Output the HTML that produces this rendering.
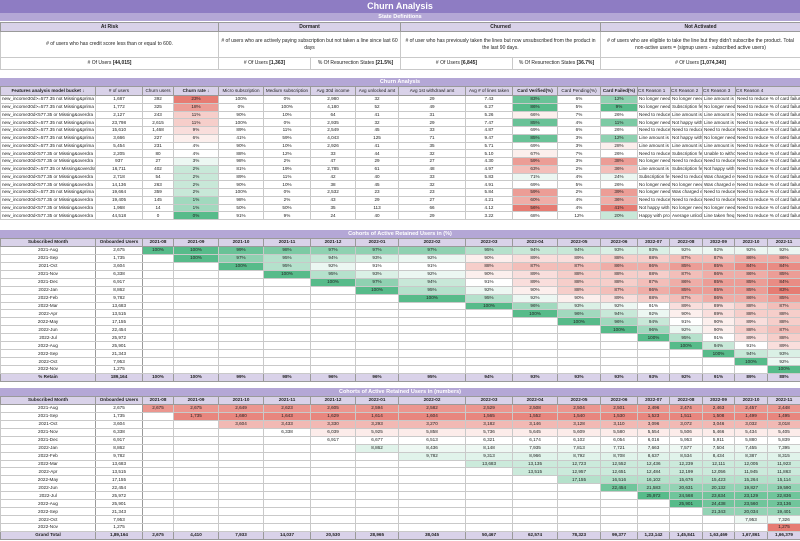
<!DOCTYPE html>
<html><head><meta charset="utf-8">
<style>
*{margin:0;padding:0;box-sizing:border-box}
body{width:800px;height:541px;background:#fff;position:relative;overflow:hidden;font-family:"Liberation Sans",sans-serif;color:#222}
.bar{position:absolute;left:0;width:800px;color:#fff;font-weight:bold;text-align:center}
.t1{top:0;height:13px;background:#8e7cc3;font-size:9px;line-height:13px}
.t2{background:#b4a7d6;font-size:5.5px;line-height:8px;height:8px}
table{position:absolute;left:0;width:800px;border-collapse:collapse;table-layout:fixed;font-size:4.6px}
td{border:1px solid #c9c9c9;text-align:center;white-space:nowrap;overflow:hidden;padding:0 1px;line-height:6px}
th{border:1px solid #9a9a9a;background:#d9d2e9;font-weight:bold;text-align:center;white-space:nowrap;overflow:hidden;line-height:6px}
.sd td{font-size:5px;line-height:7px}
.sd th{font-size:5px}
.ct tr{height:7.75px}
.ct td.l{text-align:left}
.ct td.x{text-align:left;padding-left:1px}
.ct th.n{font-weight:normal}
.co tr{height:7.94px}
.co td:first-child,.co td:nth-child(2){border-right:1px solid #9a9a9a}
.ft td{background:#d9d2e9;font-weight:bold;border:1px solid #9a9a9a}
.g9{background:#57bb8a}.g8{background:#69c297}.g7{background:#7ccaa4}.g6{background:#8fd1b1}.g5{background:#a1d9be}.g4{background:#b5e1cc}.g3{background:#c8e8d8}.g2{background:#daf0e5}.g1{background:#ecf7f2}
.r1{background:#fcefed}.r2{background:#f9dedc}.r3{background:#f6ceca}.r4{background:#f3beb9}.r5{background:#efada7}.r6{background:#ec9d96}.r7{background:#e98c84}.r8{background:#e67c73}
.a{background:#e8867e}.b{background:#eb968f}.c{background:#f2b9b4}.d{background:#fcecea}.f{background:#eef8f3}.h{background:#e0f3ea}.i{background:#cbeadb}.j{background:#b5e1cb}.k{background:#93d3b4}.m{background:#70c59b}.z{background:#e67c73}
</style></head><body>
<div class="bar t1">Churn Analysis</div>
<div class="bar t2" style="top:13px">State Definitions</div>
<table class="sd" style="top:22px">
<colgroup><col style="width:218px"><col style="width:92px"><col style="width:90px"><col style="width:112px"><col style="width:88px"><col style="width:200px"></colgroup>
<tr style="height:9px"><th colspan="1">At Risk</th><th colspan="2">Dormant</th><th colspan="2">Churned</th><th>Not Activated</th></tr>
<tr style="height:26px"><td style="white-space:normal"># of users who has credit score less than or equal to 600.</td><td colspan="2" style="white-space:normal"># of users who are actively paying subscription but not taken a line since last 60 days</td><td colspan="2" style="white-space:normal"># of user who has previously taken the lines but now unsubscribed from the product in the last 90 days.</td><td style="white-space:normal"># of users who are eligible to take the line but they didn't subscribe the product. Total non-active users = (signup users - subscribed active users)</td></tr>
<tr style="height:12px"><td># Of Users <b>[44,015]</b></td><td># Of Users <b>[1,363]</b></td><td>% Of Resurrection States <b>[21.5%]</b></td><td># Of Users <b>[6,845]</b></td><td>% Of Resurrection States <b>[36.7%]</b></td><td># Of Users <b>[1,074,340]</b></td></tr>
</table>
<div class="bar t2" style="top:78px">Churn Analysis</div>
<table class="ct" style="top:86px">
<colgroup><col style="width:95px"><col style="width:47px"><col style="width:31px"><col style="width:45px"><col style="width:45px"><col style="width:47px"><col style="width:45px"><col style="width:43px"><col style="width:67px"><col style="width:47px"><col style="width:45px"><col style="width:43px"><col style="width:37px"><col style="width:33px"><col style="width:32px"><col style="width:33px"><col style="width:65px"></colgroup>
<tr style="height:9px"><th>Features analysis model bucket ↓</th><th class="n"># of users</th><th class="n">Churn users</th><th>Churn rate ↓</th><th class="n">Micro subscription</th><th class="n">Medium subscription</th><th class="n">Avg 30d income</th><th class="n">Avg unlocked amt</th><th class="n">Avg 1st withdrawl amt</th><th class="n">Avg # of lines taken</th><th>Card Verified(%)</th><th class="n">Card Pending(%)</th><th>Card Failed(%)</th><th class="n" style="text-align:left">CX Reason 1</th><th class="n" style="text-align:left">CX Reason 2</th><th class="n" style="text-align:left">CX Reason 3</th><th class="n" style="text-align:left">CX Reason 4</th></tr>
<tr><td class="l">new_income30d&gt;=577.35 not Missing&amp;prima</td><td>1,687</td><td>392</td><td class="r8">23%</td><td>100%</td><td>0%</td><td>2,980</td><td>32</td><td>29</td><td>7.43</td><td class="g8">83%</td><td>6%</td><td class="g6">12%</td><td class="x">No longer need</td><td class="x">No longer need</td><td class="x">Line amount is</td><td class="x">Need to reduce % of card failur</td></tr>
<tr><td class="l">new_income30d&gt;=577.35 not Missing&amp;prima</td><td>1,772</td><td>325</td><td class="r6">18%</td><td>0%</td><td>100%</td><td>4,180</td><td>52</td><td>49</td><td>6.27</td><td class="g9">86%</td><td>5%</td><td class="g9">9%</td><td class="x">No longer need</td><td class="x">Subscription fe</td><td class="x">No longer need</td><td class="x">Need to reduce % of card failur</td></tr>
<tr><td class="l">new_income30d&lt;577.35 or Missing&amp;overdra</td><td>2,127</td><td>243</td><td class="r3">11%</td><td>90%</td><td>10%</td><td>64</td><td>41</td><td>31</td><td>5.26</td><td class="r1">66%</td><td>7%</td><td>26%</td><td class="x">Need to reduce</td><td class="x">Line amount is</td><td class="x">Line amount is</td><td class="x">Need to reduce % of card failur</td></tr>
<tr><td class="l">new_income30d&gt;=577.35 not Missing&amp;prima</td><td>23,798</td><td>2,615</td><td class="r3">11%</td><td>100%</td><td>0%</td><td>2,935</td><td>32</td><td>29</td><td>7.47</td><td class="g8">85%</td><td>4%</td><td class="g7">11%</td><td class="x">No longer need</td><td class="x">Not happy with</td><td class="x">Line amount is</td><td class="x">Need to reduce % of card failur</td></tr>
<tr><td class="l">new_income30d&gt;=577.35 not Missing&amp;prima</td><td>15,610</td><td>1,468</td><td class="r2">9%</td><td>89%</td><td>11%</td><td>2,549</td><td>45</td><td>33</td><td>4.87</td><td>69%</td><td>6%</td><td>26%</td><td class="x">Need to reduce</td><td class="x">Need to reduce</td><td class="x">Need to reduce</td><td class="x">Need to reduce % of card failur</td></tr>
<tr><td class="l">new_income30d&gt;=577.35 not Missing&amp;prima</td><td>3,666</td><td>227</td><td class="r1">6%</td><td>41%</td><td>59%</td><td>4,043</td><td>125</td><td>71</td><td>9.47</td><td class="g8">85%</td><td>3%</td><td class="g6">12%</td><td class="x">Line amount is</td><td class="x">Not happy with</td><td class="x">No longer need</td><td class="x">Need to reduce % of card failur</td></tr>
<tr><td class="l">new_income30d&gt;=577.35 not Missing&amp;prima</td><td>5,454</td><td>231</td><td>4%</td><td>90%</td><td>10%</td><td>2,926</td><td>41</td><td>35</td><td>5.71</td><td>69%</td><td>3%</td><td class="r1">28%</td><td class="x">Line amount is</td><td class="x">Line amount is</td><td class="x">Line amount is</td><td class="x">Need to reduce % of card failur</td></tr>
<tr><td class="l">new_income30d&lt;577.35 or Missing&amp;overdra</td><td>2,205</td><td>80</td><td>4%</td><td>88%</td><td>12%</td><td>33</td><td>44</td><td>32</td><td>5.10</td><td class="r1">67%</td><td>7%</td><td>26%</td><td class="x">Need to reduce</td><td class="x">Subscription fe</td><td class="x">Unable to witho</td><td class="x">Need to reduce % of card failur</td></tr>
<tr><td class="l">new_income30d&lt;577.35 or Missing&amp;overdra</td><td>937</td><td>27</td><td class="g1">3%</td><td>98%</td><td>2%</td><td>47</td><td>29</td><td>27</td><td>4.30</td><td class="r6">59%</td><td>3%</td><td class="r6">38%</td><td class="x">No longer need</td><td class="x">Need to reduce</td><td class="x">Need to reduce</td><td class="x">Need to reduce % of card failur</td></tr>
<tr><td class="l">new_income30d&gt;=577.35 or Missing&amp;overdra</td><td>16,711</td><td>402</td><td class="g3">2%</td><td>81%</td><td>19%</td><td>2,785</td><td>61</td><td>48</td><td>4.97</td><td class="r4">63%</td><td>2%</td><td class="r4">36%</td><td class="x">Line amount is</td><td class="x">Subscription fe</td><td class="x">Not happy with</td><td class="x">Need to reduce % of card failur</td></tr>
<tr><td class="l">new_income30d&lt;577.35 or Missing&amp;overdra</td><td>2,718</td><td>54</td><td class="g3">2%</td><td>89%</td><td>11%</td><td>42</td><td>40</td><td>33</td><td>5.83</td><td class="g1">71%</td><td>4%</td><td class="g1">24%</td><td class="x">Subscription fe</td><td class="x">Need to reduce</td><td class="x">Was charged ex</td><td class="x">Need to reduce % of card failur</td></tr>
<tr><td class="l">new_income30d&lt;577.35 or Missing&amp;overdra</td><td>14,136</td><td>263</td><td class="g3">2%</td><td>90%</td><td>10%</td><td>38</td><td>45</td><td>32</td><td>4.91</td><td>69%</td><td>5%</td><td>26%</td><td class="x">No longer need</td><td class="x">No longer need</td><td class="x">Was charged ex</td><td class="x">Need to reduce % of card failur</td></tr>
<tr><td class="l">new_income30d&gt;=577.35 not Missing&amp;prima</td><td>19,664</td><td>359</td><td class="g3">2%</td><td>100%</td><td>0%</td><td>2,532</td><td>23</td><td>23</td><td>5.84</td><td class="r6">59%</td><td>2%</td><td class="r6">39%</td><td class="x">No longer need</td><td class="x">Was charged ex</td><td class="x">Need to reduce</td><td class="x">Need to reduce % of card failur</td></tr>
<tr><td class="l">new_income30d&lt;577.35 or Missing&amp;overdra</td><td>19,405</td><td>145</td><td class="g5">1%</td><td>98%</td><td>2%</td><td>43</td><td>29</td><td>27</td><td>4.21</td><td class="r5">60%</td><td>4%</td><td class="r5">36%</td><td class="x">Need to reduce</td><td class="x">Need to reduce</td><td class="x">Need to reduce</td><td class="x">Need to reduce % of card failur</td></tr>
<tr><td class="l">new_income30d&lt;577.35 or Missing&amp;overdra</td><td>1,968</td><td>14</td><td class="g5">1%</td><td>50%</td><td>50%</td><td>35</td><td>113</td><td>66</td><td>4.12</td><td class="r8">56%</td><td>4%</td><td class="r8">41%</td><td class="x">Not happy with</td><td class="x">No longer need</td><td class="x">No longer need</td><td class="x">Need to reduce % of card failur</td></tr>
<tr><td class="l">new_income30d&lt;577.35 or Missing&amp;overdra</td><td>44,518</td><td>0</td><td class="g9">0%</td><td>91%</td><td>9%</td><td>24</td><td>40</td><td>29</td><td>3.22</td><td>68%</td><td>12%</td><td class="g3">20%</td><td class="x">Happy with pro</td><td class="x">Average unlock</td><td class="x">Line taken freq</td><td class="x">Need to reduce % of card failur</td></tr>
</table>

<div class="bar t2" style="top:230px">Cohorts of Active Retained Users in (%)</div>
<table class="co" style="top:238px">
<colgroup><col style="width:95px"><col style="width:47px"><col style="width:31px"><col style="width:45px"><col style="width:45px"><col style="width:47px"><col style="width:45px"><col style="width:43px"><col style="width:67px"><col style="width:47px"><col style="width:45px"><col style="width:43px"><col style="width:37px"><col style="width:32px"><col style="width:33px"><col style="width:32px"><col style="width:33px"><col style="width:33px"></colgroup>
<tr><th>Subscribed Month</th><th>Onboarded Users</th><th>2021-08</th><th>2021-09</th><th>2021-10</th><th>2021-11</th><th>2021-12</th><th>2022-01</th><th>2022-02</th><th>2022-03</th><th>2022-04</th><th>2022-05</th><th>2022-06</th><th>2022-07</th><th>2022-08</th><th>2022-09</th><th>2022-10</th><th>2022-11</th></tr>
<tr><td>2021-Aug</td><td>2,675</td><td class="g9">100%</td><td class="g9">100%</td><td class="g8">99%</td><td class="g7">98%</td><td class="g6">97%</td><td class="g6">97%</td><td class="g6">97%</td><td class="g4">95%</td><td class="g3">94%</td><td class="g3">94%</td><td class="g2">93%</td><td class="g2">93%</td><td class="g1">92%</td><td class="g1">92%</td><td class="g1">92%</td><td class="g1">92%</td></tr>
<tr><td>2021-Sep</td><td>1,735</td><td></td><td class="g9">100%</td><td class="g6">97%</td><td class="g4">95%</td><td class="g3">94%</td><td class="g2">93%</td><td class="g1">92%</td><td class="r1">90%</td><td class="r2">89%</td><td class="r2">89%</td><td class="r3">88%</td><td class="r3">88%</td><td class="r4">87%</td><td class="r4">87%</td><td class="r5">86%</td><td class="r5">86%</td></tr>
<tr><td>2021-Oct</td><td>3,604</td><td></td><td></td><td class="g9">100%</td><td class="g4">95%</td><td class="g1">92%</td><td>91%</td><td>91%</td><td class="r3">88%</td><td class="r4">87%</td><td class="r4">87%</td><td class="r5">86%</td><td class="r5">86%</td><td class="r6">85%</td><td class="r6">85%</td><td class="r7">84%</td><td class="r7">84%</td></tr>
<tr><td>2021-Nov</td><td>6,338</td><td></td><td></td><td></td><td class="g9">100%</td><td class="g4">95%</td><td class="g2">93%</td><td class="g1">92%</td><td class="r1">90%</td><td class="r2">89%</td><td class="r3">88%</td><td class="r3">88%</td><td class="r3">88%</td><td class="r4">87%</td><td class="r5">86%</td><td class="r5">86%</td><td class="r6">85%</td></tr>
<tr><td>2021-Dec</td><td>6,917</td><td></td><td></td><td></td><td></td><td class="g9">100%</td><td class="g6">97%</td><td class="g3">94%</td><td>91%</td><td class="r2">89%</td><td class="r3">88%</td><td class="r3">88%</td><td class="r4">87%</td><td class="r5">86%</td><td class="r6">85%</td><td class="r6">85%</td><td class="r7">84%</td></tr>
<tr><td>2022-Jan</td><td>8,862</td><td></td><td></td><td></td><td></td><td></td><td class="g9">100%</td><td class="g4">95%</td><td class="g1">92%</td><td class="r1">90%</td><td class="r3">88%</td><td class="r4">87%</td><td class="r5">86%</td><td class="r6">85%</td><td class="r6">85%</td><td class="r6">85%</td><td class="r8">83%</td></tr>
<tr><td>2022-Feb</td><td>9,782</td><td></td><td></td><td></td><td></td><td></td><td></td><td class="g9">100%</td><td class="g4">95%</td><td class="g1">92%</td><td class="r1">90%</td><td class="r2">89%</td><td class="r3">88%</td><td class="r4">87%</td><td class="r5">86%</td><td class="r5">86%</td><td class="r6">85%</td></tr>
<tr><td>2022-Mar</td><td>13,683</td><td></td><td></td><td></td><td></td><td></td><td></td><td></td><td class="g9">100%</td><td class="g5">96%</td><td class="g2">93%</td><td class="g1">92%</td><td>91%</td><td class="r2">89%</td><td class="r2">89%</td><td class="r3">88%</td><td class="r4">87%</td></tr>
<tr><td>2022-Apr</td><td>13,515</td><td></td><td></td><td></td><td></td><td></td><td></td><td></td><td></td><td class="g9">100%</td><td class="g5">96%</td><td class="g3">94%</td><td class="g1">92%</td><td class="r1">90%</td><td class="r2">89%</td><td class="r3">88%</td><td class="r3">88%</td></tr>
<tr><td>2022-May</td><td>17,155</td><td></td><td></td><td></td><td></td><td></td><td></td><td></td><td></td><td></td><td class="g9">100%</td><td class="g5">96%</td><td class="g3">94%</td><td>91%</td><td class="r1">90%</td><td class="r2">89%</td><td class="r3">88%</td></tr>
<tr><td>2022-Jun</td><td>22,454</td><td></td><td></td><td></td><td></td><td></td><td></td><td></td><td></td><td></td><td></td><td class="g9">100%</td><td class="g5">96%</td><td class="g1">92%</td><td class="r1">90%</td><td class="r3">88%</td><td class="r4">87%</td></tr>
<tr><td>2022-Jul</td><td>25,972</td><td></td><td></td><td></td><td></td><td></td><td></td><td></td><td></td><td></td><td></td><td></td><td class="g9">100%</td><td class="g4">95%</td><td>91%</td><td class="r2">89%</td><td class="r3">88%</td></tr>
<tr><td>2022-Aug</td><td>25,901</td><td></td><td></td><td></td><td></td><td></td><td></td><td></td><td></td><td></td><td></td><td></td><td></td><td class="g9">100%</td><td class="g3">94%</td><td>91%</td><td class="r2">89%</td></tr>
<tr><td>2022-Sep</td><td>21,343</td><td></td><td></td><td></td><td></td><td></td><td></td><td></td><td></td><td></td><td></td><td></td><td></td><td></td><td class="g9">100%</td><td class="g3">94%</td><td class="g2">93%</td></tr>
<tr><td>2022-Oct</td><td>7,953</td><td></td><td></td><td></td><td></td><td></td><td></td><td></td><td></td><td></td><td></td><td></td><td></td><td></td><td></td><td class="g9">100%</td><td class="g1">92%</td></tr>
<tr><td>2022-Nov</td><td>1,275</td><td></td><td></td><td></td><td></td><td></td><td></td><td></td><td></td><td></td><td></td><td></td><td></td><td></td><td></td><td></td><td class="g9">100%</td></tr>
<tr class="ft"><td>% Retain</td><td>189,164</td><td>100%</td><td>100%</td><td>99%</td><td>98%</td><td>96%</td><td>96%</td><td>95%</td><td>94%</td><td>93%</td><td>93%</td><td>93%</td><td>93%</td><td>92%</td><td>91%</td><td>89%</td><td>88%</td></tr>
</table>

<div class="bar t2" style="top:388px">Cohorts of Active Retained Users in (numbers)</div>
<table class="co" style="top:396px">
<colgroup><col style="width:95px"><col style="width:47px"><col style="width:31px"><col style="width:45px"><col style="width:45px"><col style="width:47px"><col style="width:45px"><col style="width:43px"><col style="width:67px"><col style="width:47px"><col style="width:45px"><col style="width:43px"><col style="width:37px"><col style="width:32px"><col style="width:33px"><col style="width:32px"><col style="width:33px"><col style="width:33px"></colgroup>
<tr><th>Subscribed Month</th><th>Onboarded Users</th><th>2021-08</th><th>2021-09</th><th>2021-10</th><th>2021-11</th><th>2021-12</th><th>2022-01</th><th>2022-02</th><th>2022-03</th><th>2022-04</th><th>2022-05</th><th>2022-06</th><th>2022-07</th><th>2022-08</th><th>2022-09</th><th>2022-10</th><th>2022-11</th></tr>
<tr><td>2021-Aug</td><td>2,675</td><td class="b">2,675</td><td class="b">2,675</td><td class="b">2,649</td><td class="b">2,623</td><td class="b">2,605</td><td class="b">2,594</td><td class="b">2,582</td><td class="b">2,529</td><td class="b">2,508</td><td class="b">2,504</td><td class="b">2,501</td><td class="b">2,496</td><td class="b">2,474</td><td class="b">2,463</td><td class="b">2,457</td><td class="b">2,448</td></tr>
<tr><td>2021-Sep</td><td>1,735</td><td></td><td class="a">1,735</td><td class="a">1,680</td><td class="a">1,643</td><td class="a">1,629</td><td class="a">1,614</td><td class="a">1,604</td><td class="a">1,565</td><td class="a">1,552</td><td class="a">1,540</td><td class="a">1,530</td><td class="a">1,523</td><td class="a">1,511</td><td class="a">1,508</td><td class="a">1,499</td><td class="a">1,495</td></tr>
<tr><td>2021-Oct</td><td>3,604</td><td></td><td></td><td class="c">3,604</td><td class="c">3,433</td><td class="c">3,330</td><td class="c">3,293</td><td class="c">3,270</td><td class="c">3,182</td><td class="c">3,146</td><td class="c">3,128</td><td class="c">3,110</td><td class="c">3,096</td><td class="c">3,072</td><td class="c">3,046</td><td class="c">3,032</td><td class="c">3,018</td></tr>
<tr><td>2021-Nov</td><td>6,338</td><td></td><td></td><td></td><td>6,338</td><td class="d">6,039</td><td class="d">5,925</td><td class="d">5,858</td><td class="d">5,736</td><td class="d">5,645</td><td class="d">5,609</td><td class="d">5,580</td><td class="d">5,554</td><td class="d">5,506</td><td class="d">5,466</td><td class="d">5,434</td><td class="d">5,405</td></tr>
<tr><td>2021-Dec</td><td>6,917</td><td></td><td></td><td></td><td></td><td>6,917</td><td>6,677</td><td>6,513</td><td>6,321</td><td>6,174</td><td>6,102</td><td>6,054</td><td>6,016</td><td>5,953</td><td>5,911</td><td>5,880</td><td>5,839</td></tr>
<tr><td>2022-Jan</td><td>8,862</td><td></td><td></td><td></td><td></td><td></td><td class="h">8,862</td><td class="f">8,436</td><td class="f">8,148</td><td class="f">7,935</td><td class="f">7,813</td><td class="f">7,721</td><td class="f">7,663</td><td class="f">7,577</td><td class="f">7,504</td><td class="f">7,455</td><td class="f">7,395</td></tr>
<tr><td>2022-Feb</td><td>9,782</td><td></td><td></td><td></td><td></td><td></td><td></td><td class="h">9,782</td><td class="h">9,313</td><td class="h">8,966</td><td class="h">8,792</td><td class="h">8,708</td><td class="h">8,637</td><td class="h">8,534</td><td class="h">8,434</td><td class="h">8,387</td><td class="h">8,315</td></tr>
<tr><td>2022-Mar</td><td>13,683</td><td></td><td></td><td></td><td></td><td></td><td></td><td></td><td class="i">13,683</td><td class="i">13,135</td><td class="i">12,723</td><td class="i">12,552</td><td class="i">12,436</td><td class="i">12,239</td><td class="i">12,111</td><td class="i">12,005</td><td class="i">11,923</td></tr>
<tr><td>2022-Apr</td><td>13,515</td><td></td><td></td><td></td><td></td><td></td><td></td><td></td><td></td><td class="i">13,515</td><td class="i">12,957</td><td class="i">12,651</td><td class="i">12,484</td><td class="i">12,199</td><td class="i">12,056</td><td class="i">11,945</td><td class="i">11,863</td></tr>
<tr><td>2022-May</td><td>17,155</td><td></td><td></td><td></td><td></td><td></td><td></td><td></td><td></td><td></td><td class="j">17,155</td><td class="j">16,516</td><td class="j">16,102</td><td class="j">15,676</td><td class="j">15,423</td><td class="j">15,264</td><td class="j">15,114</td></tr>
<tr><td>2022-Jun</td><td>22,454</td><td></td><td></td><td></td><td></td><td></td><td></td><td></td><td></td><td></td><td></td><td class="m">22,454</td><td class="k">21,583</td><td class="k">20,631</td><td class="k">20,132</td><td class="k">19,827</td><td class="k">19,590</td></tr>
<tr><td>2022-Jul</td><td>25,972</td><td></td><td></td><td></td><td></td><td></td><td></td><td></td><td></td><td></td><td></td><td></td><td class="g9">25,972</td><td class="m">24,568</td><td class="m">23,634</td><td class="m">23,129</td><td class="m">22,836</td></tr>
<tr><td>2022-Aug</td><td>25,901</td><td></td><td></td><td></td><td></td><td></td><td></td><td></td><td></td><td></td><td></td><td></td><td></td><td class="g9">25,901</td><td class="m">24,438</td><td class="m">23,560</td><td class="m">23,136</td></tr>
<tr><td>2022-Sep</td><td>21,343</td><td></td><td></td><td></td><td></td><td></td><td></td><td></td><td></td><td></td><td></td><td></td><td></td><td></td><td class="k">21,343</td><td class="k">20,034</td><td class="k">19,401</td></tr>
<tr><td>2022-Oct</td><td>7,953</td><td></td><td></td><td></td><td></td><td></td><td></td><td></td><td></td><td></td><td></td><td></td><td></td><td></td><td></td><td class="f">7,953</td><td class="f">7,326</td></tr>
<tr><td>2022-Nov</td><td>1,275</td><td></td><td></td><td></td><td></td><td></td><td></td><td></td><td></td><td></td><td></td><td></td><td></td><td></td><td></td><td></td><td class="z">1,275</td></tr>
<tr class="ft"><td>Grand Total</td><td>1,89,164</td><td>2,675</td><td>4,410</td><td>7,933</td><td>14,037</td><td>20,530</td><td>28,965</td><td>38,045</td><td>50,467</td><td>62,574</td><td>78,323</td><td>99,377</td><td>1,23,142</td><td>1,45,841</td><td>1,63,469</td><td>1,67,861</td><td>1,66,379</td></tr>
</table>
</body></html>
